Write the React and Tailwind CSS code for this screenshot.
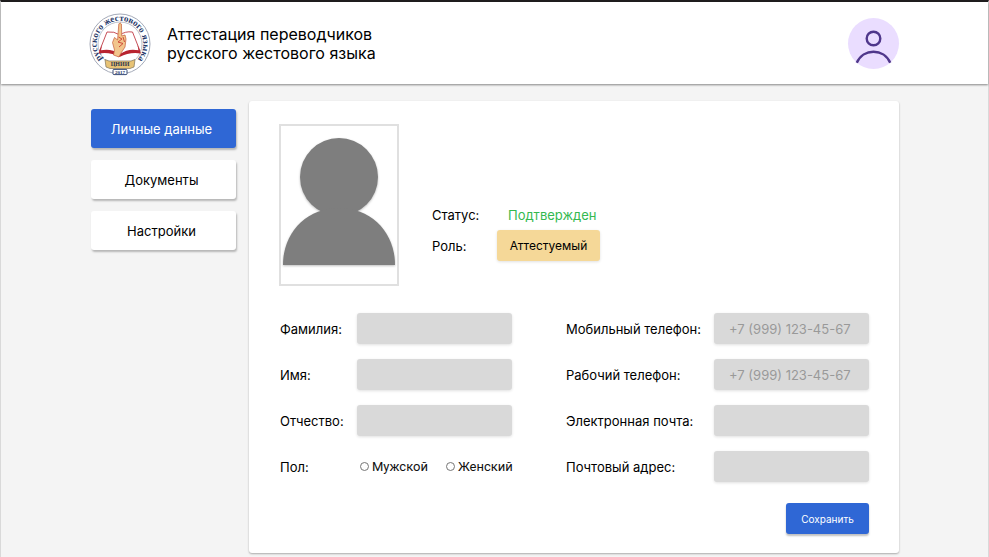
import React from "react";

const navItems = [
  { label: "Личные данные", active: true },
  { label: "Документы", active: false },
  { label: "Настройки", active: false },
];

const nameFields = [
  { id: "surname", label: "Фамилия:" },
  { id: "name", label: "Имя:" },
  { id: "patronymic", label: "Отчество:" },
];

const contactFields = [
  { id: "mobile", label: "Мобильный телефон:", type: "tel", placeholder: "+7 (999) 123-45-67" },
  { id: "work", label: "Рабочий телефон:", type: "tel", placeholder: "+7 (999) 123-45-67" },
  { id: "email", label: "Электронная почта:", type: "email" },
  { id: "address", label: "Почтовый адрес:", type: "text" },
];

function Logo() {
  return (
    <svg viewBox="0 0 62 62" className="h-[62px] w-[62px] shrink-0 overflow-visible" role="img" aria-label="Логотип">
      <defs>
        <path id="ring" d="M14.5 47.5 A23.3 23.3 0 1 1 47.5 47.5" />
      </defs>
      <circle cx="31" cy="31" r="30" fill="#fff" stroke="#8d94a6" strokeWidth="0.8" />
      <circle cx="31" cy="31" r="22" fill="#fff" stroke="#8d94a6" strokeWidth="0.6" />
      <text fill="#1f3768" fontFamily="Liberation Serif, serif" fontWeight="700" fontSize="9">
        <textPath href="#ring" startOffset="50%" textAnchor="middle">
          русского жестового языка
        </textPath>
      </text>
      <path d="M18 19 L10.5 38 Q21 36 30.5 42 Q41 36 51 38 L43.5 19 Q36 18 31 22 Q25 18 18 19 Z" fill="#fff" stroke="#b8232f" strokeWidth="0.8" />
      <path d="M13 32 L9.5 40.5 Q21 38.5 30.5 44 Q41 38.5 52 40.5 L48.5 32 L49.5 37.5 Q40 35 31 41 Q21 35 12 37.5 Z" fill="#b8232f" />
      <path d="M28.6 27 L29.8 11 Q31 8.5 32.4 11 L32.8 23 L36 22 L37 26 L36 34 L32 40 L30 44 L24.5 42 L25.5 37 L23.5 29.5 L25.5 24.5 Z" fill="#f2c58c" stroke="#c45c38" strokeWidth="0.7" />
      <path d="M29.5 24 L33 26 L29 29 L34 30.5 L30 34 M34 24 L35.5 29" fill="none" stroke="#c93f32" strokeWidth="0.9" />
      <path d="M16 46.5 L20 48 L42 48 L46 46.5 L45 54 L41 55.5 L21 55.5 L17 54 Z" fill="#e8c375" stroke="#7b715c" strokeWidth="0.7" />
      <text x="31" y="53.4" textAnchor="middle" fill="#26304d" fontFamily="Liberation Serif, serif" fontWeight="700" fontSize="6">ЦНИИ</text>
      <rect x="24" y="56.4" width="14" height="5.2" rx="1" fill="#fff" stroke="#1f3768" strokeWidth="0.9" />
      <text x="31" y="60.8" textAnchor="middle" fill="#1f3768" fontFamily="Liberation Serif, serif" fontWeight="700" fontSize="5">2017</text>
    </svg>
  );
}

function Field({ id, label, type = "text", placeholder, width }) {
  return (
    <div className="flex items-center">
      <label htmlFor={id} className={`${width} shrink-0 whitespace-nowrap`}>{label}</label>
      <input
        id={id}
        type={type}
        placeholder={placeholder}
        className="h-[31px] w-[155px] rounded-[3px] bg-[#d9d9d9] px-[15px] shadow-[0_1px_3px_rgba(0,0,0,0.12)] outline-none placeholder:text-[#999999]"
      />
    </div>
  );
}

export default function App() {
  return (
    <div className="min-h-screen border-x border-t-2 border-x-[#d9d9d9] border-t-[#1f1d1e] bg-[#f4f4f4] font-['Inter','Liberation_Sans',sans-serif] text-[13px] leading-4 text-black">
      <header className="flex h-[82px] items-center bg-white pt-px pr-[89px] pl-[88px] shadow-[0_1px_2px_rgba(0,0,0,0.45)]">
        <Logo />
        <p className="ml-4 text-base leading-[19px]">
          Аттестация переводчиков
          <br />
          русского жестового языка
        </p>
        <button type="button" aria-label="Профиль" className="ml-auto h-[51px] w-[51px] rounded-full bg-[#eaddff]">
          <svg viewBox="0 0 51 51" fill="none" stroke="#4f378b" strokeWidth="2.4">
            <circle cx="25.5" cy="20.5" r="6.8" />
            <path d="M8.8 44.8 C15 30 36 30 42.2 44.8" />
          </svg>
        </button>
      </header>

      <div className="flex items-start pt-[17px] pr-[89px] pb-1 pl-[90px]">
        <nav className="mt-2 mr-[13px] flex w-[145px] shrink-0 flex-col gap-3">
          {navItems.map((item) => (
            <button
              key={item.label}
              type="button"
              className={`h-[39px] rounded-[3px] pr-1 shadow-[1px_2px_2px_rgba(0,0,0,0.25)] ${
                item.active ? "bg-[#2f67d5] text-white" : "bg-white"
              }`}
            >
              {item.label}
            </button>
          ))}
        </nav>

        <main className="min-w-0 flex-1 rounded-[3px] bg-white pt-[23px] pr-[30px] pb-[19px] pl-[30px] shadow-[0_1px_2px_rgba(0,0,0,0.3)]">
          <div className="flex items-end">
            <div className="h-[162px] w-[120px] shrink-0 border-2 border-[#e0e0e0]">
              <svg viewBox="0 0 116 158" className="drop-shadow-[0_1px_1px_rgba(0,0,0,0.25)]" role="img" aria-label="Фотография">
                <g fill="#7e7e7e">
                  <circle cx="58" cy="51" r="39" />
                  <path d="M2 139 C2 106 26 82 58 82 C90 82 114 106 114 139 Z" />
                </g>
              </svg>
            </div>
            <dl className="mb-[25px] ml-[33px] grid grid-cols-[65px_auto] grid-rows-[31px_31px] items-center">
              <dt>Статус:</dt>
              <dd className="pl-[11px] text-[#34b94f]">Подтвержден</dd>
              <dt>Роль:</dt>
              <dd className="flex h-[31px] w-[103px] items-center justify-center rounded-[3px] bg-[#f5d898] text-[12px] shadow-[0_1px_3px_rgba(0,0,0,0.12)]">
                Аттестуемый
              </dd>
            </dl>
          </div>

          <form className="mt-[27px]" onSubmit={(e) => e.preventDefault()}>
            <div className="flex justify-between">
              <div className="flex flex-col gap-[15px] pl-px">
                {nameFields.map((f) => (
                  <Field key={f.id} {...f} width="w-[77px]" />
                ))}
                <div role="radiogroup" aria-labelledby="gender" className="flex h-[31px] items-center">
                  <span id="gender" className="w-[77px]">Пол:</span>
                  <div className="flex gap-[18px] pl-[3px] font-['Roboto','Liberation_Sans',sans-serif] text-[#111111]">
                    {["Мужской", "Женский"].map((g) => (
                      <label key={g} className="flex items-center gap-[3px]">
                        <input type="radio" name="gender" className="h-[9px] w-[9px] appearance-none rounded-full border border-[#767676] bg-white checked:bg-[#2f67d5]" />
                        {g}
                      </label>
                    ))}
                  </div>
                </div>
              </div>
              <div className="flex flex-col gap-[15px]">
                {contactFields.map((f) => (
                  <Field key={f.id} {...f} width="w-[148px]" />
                ))}
              </div>
            </div>
            <div className="mt-[21px] flex justify-end">
              <button type="submit" className="h-[31px] w-[83px] rounded-[3px] bg-[#2f67d5] text-[10px] text-white shadow-[0_2px_2px_rgba(0,0,0,0.25)]">
                Сохранить
              </button>
            </div>
          </form>
        </main>
      </div>
    </div>
  );
}
